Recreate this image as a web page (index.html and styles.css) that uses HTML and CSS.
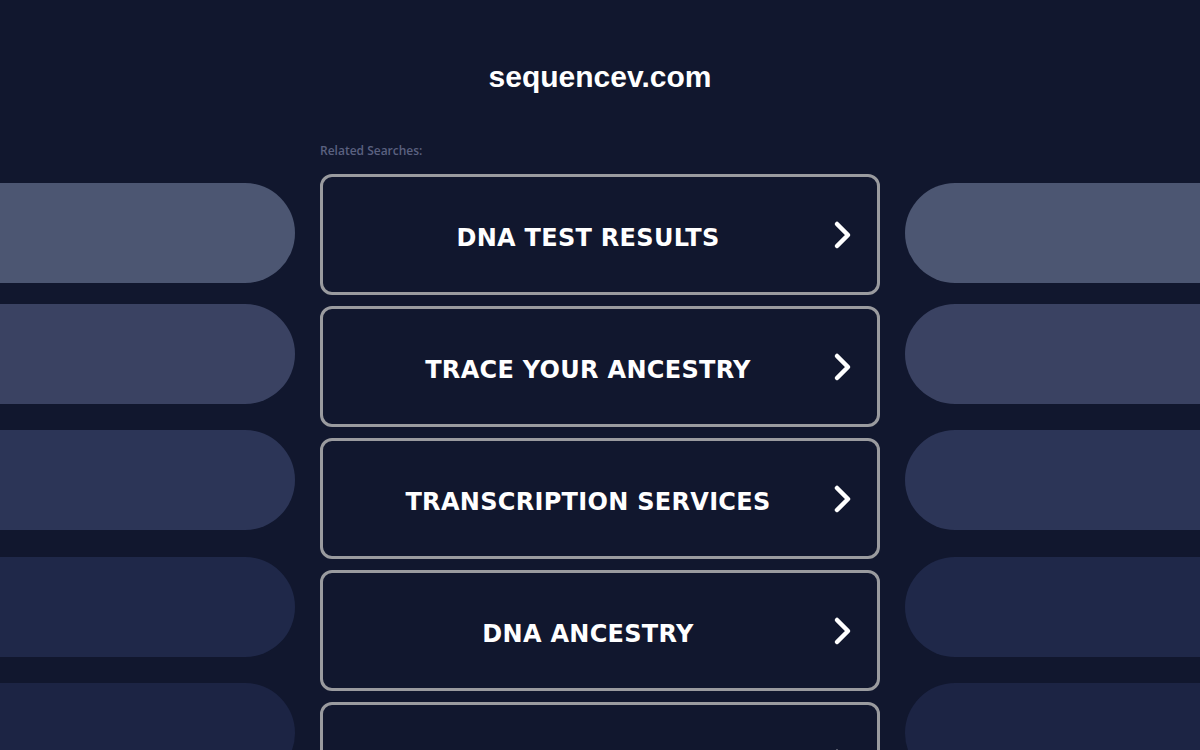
FILE: index.html
```html
<!DOCTYPE html>
<html lang="en">
<head>
<meta charset="utf-8">
<title>sequencev.com</title>
<link rel="stylesheet" href="styles.css">
</head>
<body>
<div class="page">
  <div class="side side-left">
    <div class="pill p1"></div>
    <div class="pill p2"></div>
    <div class="pill p3"></div>
    <div class="pill p4"></div>
    <div class="pill p5"></div>
  </div>
  <main class="center">
    <h1 class="domain">sequencev.com</h1>
    <div class="related">Related Searches:</div>
    <ul class="links">
      <li><a class="link" href="#"><span class="label">DNA TEST RESULTS</span><svg class="chev" viewBox="0 0 20 30"><path d="M4 4 L15 15 L4 26" fill="none" stroke="#fff" stroke-width="4.5" stroke-linecap="round" stroke-linejoin="round"/></svg></a></li>
      <li><a class="link" href="#"><span class="label">TRACE YOUR ANCESTRY</span><svg class="chev" viewBox="0 0 20 30"><path d="M4 4 L15 15 L4 26" fill="none" stroke="#fff" stroke-width="4.5" stroke-linecap="round" stroke-linejoin="round"/></svg></a></li>
      <li><a class="link" href="#"><span class="label">TRANSCRIPTION SERVICES</span><svg class="chev" viewBox="0 0 20 30"><path d="M4 4 L15 15 L4 26" fill="none" stroke="#fff" stroke-width="4.5" stroke-linecap="round" stroke-linejoin="round"/></svg></a></li>
      <li><a class="link" href="#"><span class="label">DNA ANCESTRY</span><svg class="chev" viewBox="0 0 20 30"><path d="M4 4 L15 15 L4 26" fill="none" stroke="#fff" stroke-width="4.5" stroke-linecap="round" stroke-linejoin="round"/></svg></a></li>
      <li><a class="link" href="#"><span class="label">GENETIC TESTING</span><svg class="chev" viewBox="0 0 20 30"><path d="M4 4 L15 15 L4 26" fill="none" stroke="#fff" stroke-width="4.5" stroke-linecap="round" stroke-linejoin="round"/></svg></a></li>
    </ul>
  </main>
  <div class="side side-right">
    <div class="pill p1"></div>
    <div class="pill p2"></div>
    <div class="pill p3"></div>
    <div class="pill p4"></div>
    <div class="pill p5"></div>
  </div>
</div>
</body>
</html>
```
FILE: styles.css
```css
html, body {
  margin: 0;
  padding: 0;
  background: #11172e;
  height: 100%;
  overflow: hidden;
}
body {
  font-family: "Liberation Sans", Arial, sans-serif;
  color: #fff;
}
.page {
  display: grid;
  grid-template-columns: 295px 560px 295px;
  column-gap: 25px;
  height: 750px;
  overflow: hidden;
}
.side {
  display: flex;
  flex-direction: column;
  padding-top: 183px;
}
.pill {
  height: 100px;
  flex: none;
}
.side-left .pill { border-radius: 0 50px 50px 0; }
.side-right .pill { border-radius: 50px 0 0 50px; }
.p1 { background: #4c5672; }
.p2 { background: #3a4262; margin-top: 21px; }
.p3 { background: #2c3557; margin-top: 26px; }
.p4 { background: #1f2849; margin-top: 27px; }
.p5 { background: #1c2444; margin-top: 26px; }

.center {
  display: flex;
  flex-direction: column;
}
.domain {
  margin: 60px 0 0;
  text-align: center;
  font-family: "Liberation Sans", Arial, sans-serif;
  font-weight: 700;
  font-size: 30px;
  line-height: 34px;
  color: #fff;
}
.related {
  margin-top: 49px;
  font-family: "Open Sans", Inter, sans-serif;
  font-weight: 600;
  font-size: 12px;
  line-height: 16px;
  color: #5b6180;
}
.links {
  list-style: none;
  margin: 15px 0 0;
  padding: 0;
  display: flex;
  flex-direction: column;
  gap: 11px;
}
.link {
  box-sizing: border-box;
  height: 121px;
  border: 3px solid #9a9b9f;
  border-radius: 12px;
  display: flex;
  align-items: center;
  justify-content: center;
  position: relative;
  text-decoration: none;
  color: #fff;
  padding: 6px 24px 0 0;
}
.label {
  font-family: "DejaVu Sans", Verdana, sans-serif;
  font-weight: 700;
  font-size: 24px;
  letter-spacing: 0.3px;
  color: #fff;
}
.chev {
  position: absolute;
  right: 24px;
  top: 50%;
  width: 20px;
  height: 30px;
  margin-top: -15px;
}
```
